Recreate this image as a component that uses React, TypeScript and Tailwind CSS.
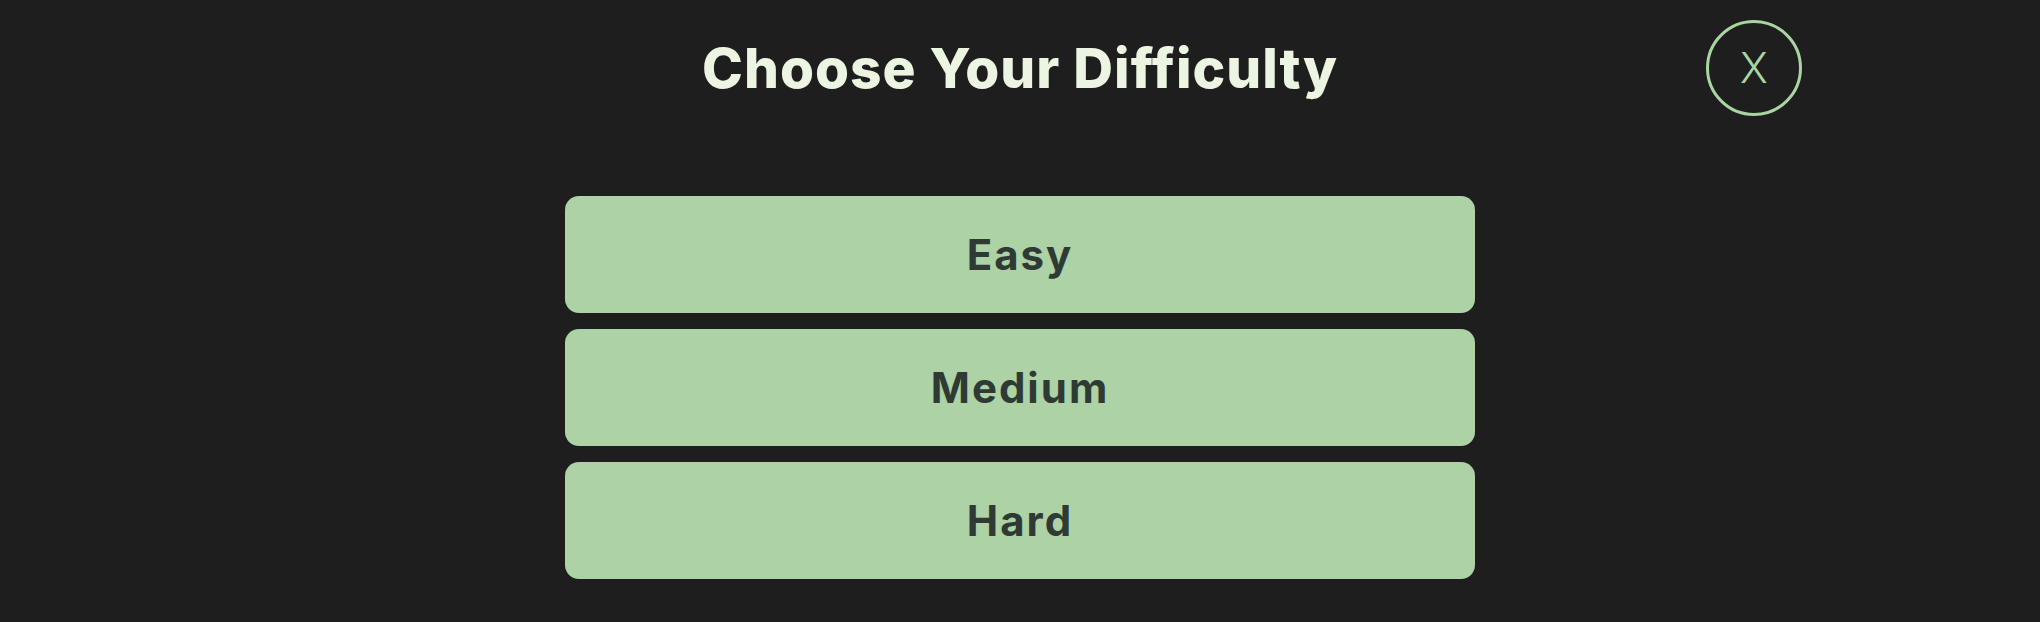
import React from "react";

const levels = ["Easy", "Medium", "Hard"];

export default function App() {
  return (
    <div className="min-h-screen w-full bg-[#1e1e1e] font-['Inter',_'Liberation_Sans',_sans-serif]">
      <header className="grid h-[136px] grid-cols-[1fr_auto_1fr] items-center">
        <div />
        <h1 className="text-[55px] font-extrabold leading-none tracking-[1px] text-[#ebf5e1]">
          Choose Your Difficulty
        </h1>
        <div className="flex justify-end pr-[238px]">
          <button className="flex h-[96px] w-[96px] items-center justify-center rounded-full border-[3px] border-[#a8d5a2] text-[42px] font-light leading-none text-[#a8d5a2]">
            X
          </button>
        </div>
      </header>
      <div className="mx-auto mt-[60px] flex w-[910px] flex-col gap-4">
        {levels.map((level) => (
          <button
            key={level}
            className="flex h-[117px] w-full items-center justify-center rounded-[14px] bg-[#acd2a6] text-[42px] font-bold tracking-[2px] text-[#2e3a33]"
          >
            {level}
          </button>
        ))}
      </div>
    </div>
  );
}
